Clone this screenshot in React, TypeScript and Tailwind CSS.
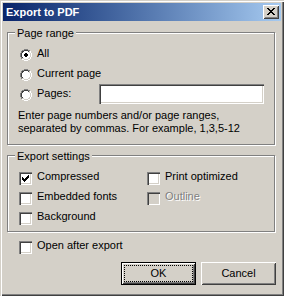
import React from "react";

type Palette = Record<string, string>;

// tiny pixel-art helper for the classic glyphs (radio, check, close X)
function Pixels({ rows, colors }: { rows: string[]; colors: Palette }) {
  const w = rows[0].length;
  const h = rows.length;
  return (
    <svg width={w} height={h} viewBox={`0 0 ${w} ${h}`} shapeRendering="crispEdges" className="block">
      {rows.flatMap((row, y) =>
        row.split("").map((c, x) =>
          colors[c] ? <rect key={`${x}-${y}`} x={x} y={y} width={1} height={1} fill={colors[c]} /> : null
        )
      )}
    </svg>
  );
}

const PAL: Palette = { G: "#808080", D: "#404040", W: "#ffffff", L: "#d4d0c8", X: "#000000", "#": "#000000" };

const RADIO = [
  "....GGGG....",
  "..GGDDDDGG..",
  ".GDDWWWWDLW.",
  ".GDWWWWWWLW.",
  "GDWWWWWWWWLW",
  "GDWWWWWWWWLW",
  "GDWWWWWWWWLW",
  "GDWWWWWWWWLW",
  ".GDWWWWWWLW.",
  ".GLLWWWWLLW.",
  "..WWLLLLWW..",
  "....WWWW....",
];

const RADIO_ON = RADIO.map((row, y) => {
  const dot: Record<number, number[]> = { 4: [5, 6], 5: [4, 5, 6, 7], 6: [4, 5, 6, 7], 7: [5, 6] };
  if (!dot[y]) return row;
  return row
    .split("")
    .map((c, x) => (dot[y].includes(x) ? "X" : c))
    .join("");
});

const CHECK = ["......#", ".....##", "#...###", "##.###.", "#####..", ".###...", "..#...."];

const CLOSE_X = ["##....##", ".##..##.", "..####..", "...##...", "..####..", ".##..##.", "##....##"];

const sunken =
  "shadow-[inset_1px_1px_0_#808080,inset_2px_2px_0_#404040,inset_-1px_-1px_0_#ffffff,inset_-2px_-2px_0_#d4d0c8]";
const raised =
  "shadow-[inset_1px_1px_0_#ffffff,inset_-1px_-1px_0_#404040,inset_2px_2px_0_#d4d0c8,inset_-2px_-2px_0_#808080]";

function Radio({ label, checked }: { label: string; checked?: boolean }) {
  return (
    <div className="flex items-start h-[20px] pl-[11px]">
      <div className="w-[13px] pt-[2px] pl-[1px]">
        <Pixels rows={checked ? RADIO_ON : RADIO} colors={PAL} />
      </div>
      <span className="ml-[5px]">{label}</span>
    </div>
  );
}

function Check({ label, checked, disabled }: { label: string; checked?: boolean; disabled?: boolean }) {
  return (
    <div className="flex items-start h-[20px]">
      <div
        className={`mt-[2px] w-[13px] h-[13px] p-[3px] ${sunken} ${disabled ? "bg-[#d4d0c8]" : "bg-white"}`}
      >
        {checked && <Pixels rows={CHECK} colors={PAL} />}
      </div>
      <span className={`ml-[5px] ${disabled ? "text-[#808080] [text-shadow:1px_1px_0_#ffffff]" : ""}`}>
        {label}
      </span>
    </div>
  );
}

function GroupBox({ title, height, children }: { title: string; height: string; children: React.ReactNode }) {
  return (
    <div
      className={`w-[268px] ${height} border border-[#808080] shadow-[inset_1px_1px_0_#ffffff,1px_1px_0_#ffffff] flex flex-col`}
    >
      <div className="-mt-[6px] ml-[7px] px-[2px] w-fit bg-[#d4d0c8]">{title}</div>
      {children}
    </div>
  );
}

export default function App() {
  return (
    <div className="w-[284px] h-[296px] bg-[#d4d0c8] p-[3px] flex flex-col text-[11px] leading-[13px] text-black font-['Liberation_Sans',Arial,sans-serif] select-none shadow-[inset_1px_1px_0_#d4d0c8,inset_2px_2px_0_#ffffff,inset_-1px_-1px_0_#404040,inset_-2px_-2px_0_#808080]">
      {/* Title bar */}
      <div className="h-[18px] shrink-0 flex items-center justify-between bg-linear-to-r from-[#0a246a] to-[#a6caf0] pl-[3px] pr-[2px]">
        <span className="font-bold text-white">Export to PDF</span>
        <div className={`w-[16px] h-[14px] bg-[#d4d0c8] pl-[4px] pt-[3px] ${raised}`}>
          <Pixels rows={CLOSE_X} colors={PAL} />
        </div>
      </div>

      {/* Body */}
      <div className="flex flex-col px-[4px] pt-[11px]">
        <GroupBox title="Page range" height="h-[113px]">
          <div className="mt-[7px] flex flex-col">
            <Radio label="All" checked />
            <Radio label="Current page" />
            <div className="flex items-start h-[20px] pl-[11px]">
              <div className="w-[13px] pt-[2px] pl-[1px]">
                <Pixels rows={RADIO} colors={PAL} />
              </div>
              <span className="ml-[5px] w-[62px]">Pages:</span>
              <div className={`-mt-[3px] w-[165px] h-[20px] bg-white ${sunken}`} />
            </div>
          </div>
          <p className="mt-[2px] ml-[10px]">
            Enter page numbers and/or page ranges,
            <br />
            separated by commas. For example, 1,3,5-12
          </p>
        </GroupBox>

        <div className="mt-[10px]">
          <GroupBox title="Export settings" height="h-[77px]">
            <div className="mt-[7px] pl-[11px] grid grid-cols-[128px_1fr]">
              <Check label="Compressed" checked />
              <Check label="Print optimized" />
              <Check label="Embedded fonts" />
              <Check label="Outline" disabled />
              <Check label="Background" />
            </div>
          </GroupBox>
        </div>

        <div className="mt-[7px] pl-[12px]">
          <Check label="Open after export" />
        </div>

        <div className="mt-[3px] ml-[114px] flex gap-[5px]">
          <button className="w-[75px] h-[23px] border border-black bg-[#d4d0c8] p-[2px] shadow-[inset_1px_1px_0_#ffffff,inset_-1px_-1px_0_#404040,inset_2px_2px_0_#d4d0c8,inset_-2px_-2px_0_#808080]">
            <div className="h-full border border-dotted border-black flex items-center justify-center">OK</div>
          </button>
          <button className={`w-[75px] h-[23px] bg-[#d4d0c8] flex items-center justify-center ${raised}`}>
            Cancel
          </button>
        </div>
      </div>
    </div>
  );
}
